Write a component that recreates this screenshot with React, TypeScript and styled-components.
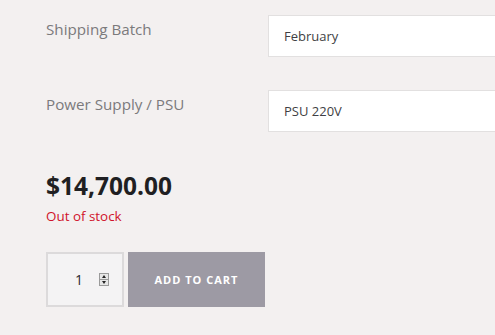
import React from 'react';
import styled, { createGlobalStyle } from 'styled-components';

const GlobalStyle = createGlobalStyle`
  html, body {
    margin: 0;
    padding: 0;
    background: #f3f0f0;
    overflow: hidden;
  }
  body {
    font-family: "Open Sans", "Liberation Sans", sans-serif;
  }
`;

const Page = styled.div`
  padding: 15px 0 0 46px;
  width: 495px;
  box-sizing: border-box;
`;

const Variations = styled.div`
  display: flex;
  flex-direction: column;
  gap: 33px;
`;

const Row = styled.div`
  display: grid;
  grid-template-columns: 222px 1fr;
  align-items: start;
`;

const Label = styled.label`
  padding-top: 3px;
  font-size: 15.2px;
  line-height: 22px;
  font-weight: 500;
  color: #7b7a7c;
`;

const Select = styled.div`
  height: 42px;
  box-sizing: border-box;
  background: #fff;
  border: 1px solid #e2e0e0;
  border-right: none;
  display: flex;
  align-items: center;
  padding-left: 15px;
  font-size: 13px;
  color: #3f3f44;
  font-weight: 500;
`;

const Price = styled.div`
  margin-top: 39px;
  font-size: 24.5px;
  line-height: 30px;
  font-weight: 700;
  color: #1f1f22;
`;

const Stock = styled.div`
  margin-top: 5px;
  font-size: 13.4px;
  line-height: 20px;
  color: #d0132b;
`;

const CartForm = styled.div`
  margin-top: 26px;
  display: flex;
  gap: 4px;
`;

const Quantity = styled.div`
  width: 78px;
  height: 55px;
  box-sizing: border-box;
  border: 2px solid #dcdadb;
  background: #f4f3f4;
  display: flex;
  align-items: center;
  padding-left: 27px;
  gap: 16px;
  font-size: 14px;
  color: #2a2a2e;
`;

const Spinner = styled.div`
  width: 10px;
  height: 13px;
  box-sizing: border-box;
  border: 1px solid #9a9a9a;
  background: #e6e6e6;
  display: flex;
  flex-direction: column;
`;

const Arrow = styled.div<{ $down?: boolean }>`
  flex: 1;
  display: flex;
  align-items: center;
  justify-content: center;
  border-top: ${(p) => (p.$down ? '1px solid #9a9a9a' : 'none')};
  &::after {
    content: '';
    border-left: 2.5px solid transparent;
    border-right: 2.5px solid transparent;
    ${(p) => (p.$down ? 'border-top: 3px solid #222;' : 'border-bottom: 3px solid #222;')}
  }
`;

const CartButton = styled.button`
  width: 137px;
  height: 55px;
  border: none;
  background: #9d9aa4;
  color: #fff;
  font-family: inherit;
  font-size: 11px;
  font-weight: 700;
  letter-spacing: 1px;
  text-transform: uppercase;
`;

export default function App() {
  return (
    <>
      <GlobalStyle />
      <Page>
        <Variations>
          <Row>
            <Label>Shipping Batch</Label>
            <Select>February</Select>
          </Row>
          <Row>
            <Label>Power Supply / PSU</Label>
            <Select>PSU 220V</Select>
          </Row>
        </Variations>
        <Price>$14,700.00</Price>
        <Stock>Out of stock</Stock>
        <CartForm>
          <Quantity>
            <span>1</span>
            <Spinner>
              <Arrow />
              <Arrow $down />
            </Spinner>
          </Quantity>
          <CartButton>Add to cart</CartButton>
        </CartForm>
      </Page>
    </>
  );
}
